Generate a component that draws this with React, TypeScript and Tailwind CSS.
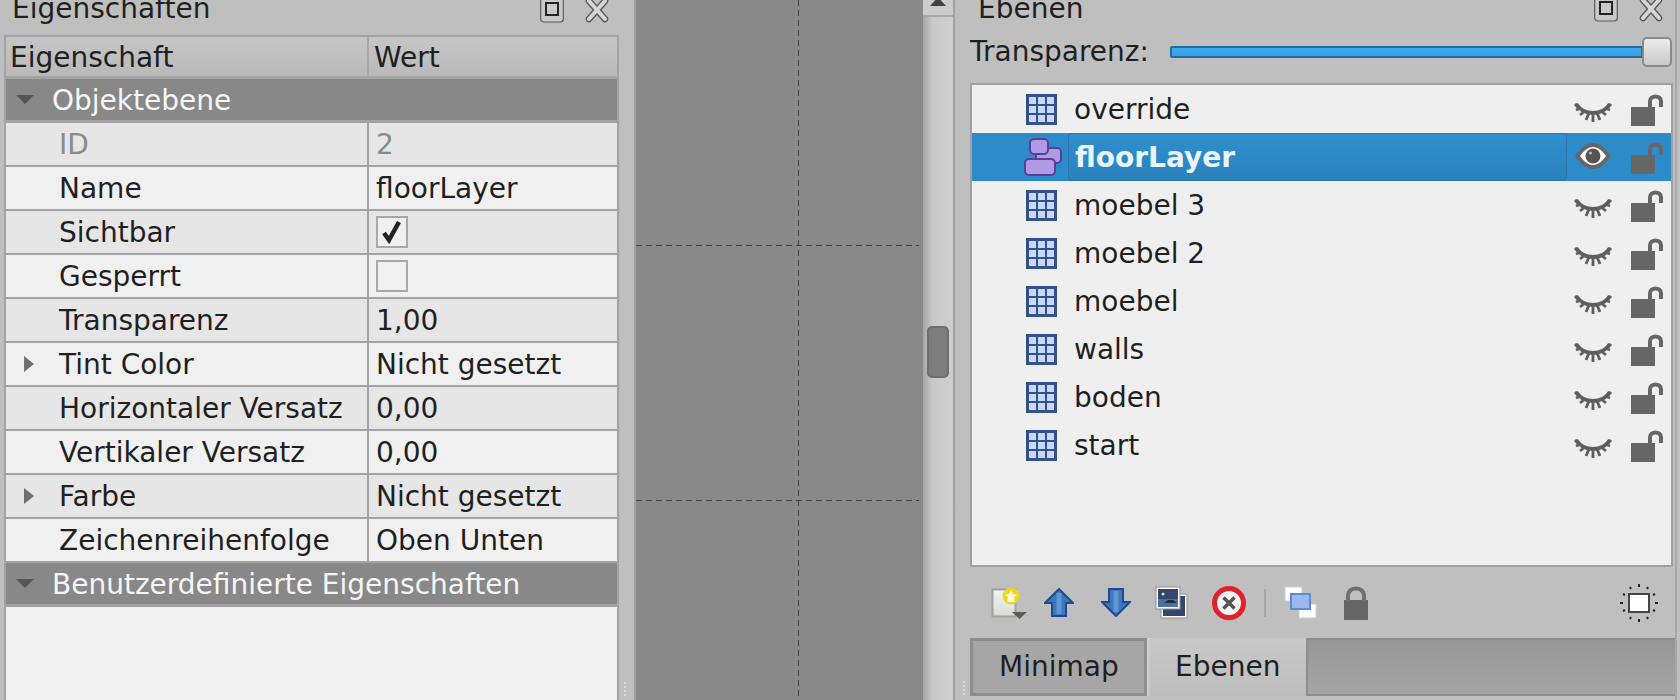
import type { ReactNode } from "react";

const props = [
  { name: "ID", value: "2", disabled: true },
  { name: "Name", value: "floorLayer" },
  { name: "Sichtbar", check: true },
  { name: "Gesperrt", check: false },
  { name: "Transparenz", value: "1,00" },
  { name: "Tint Color", value: "Nicht gesetzt", arrow: true },
  { name: "Horizontaler Versatz", value: "0,00" },
  { name: "Vertikaler Versatz", value: "0,00" },
  { name: "Farbe", value: "Nicht gesetzt", arrow: true },
  { name: "Zeichenreihenfolge", value: "Oben Unten" },
];

const layers = ["override", "floorLayer", "moebel 3", "moebel 2", "moebel", "walls", "boden", "start"];

function FloatIcon() {
  return (
    <svg width="24" height="24" viewBox="0 0 24 24" className="block">
      <rect x="0.700" y="-2" width="22.600" height="24" rx="3" fill="#c9c9c9" stroke="#5c5c5c" strokeWidth="1.200" />
      <rect x="6" y="3" width="12" height="12" fill="none" stroke="#222" strokeWidth="2" />
    </svg>
  );
}

function CloseIcon() {
  return (
    <svg width="24" height="24" viewBox="0 0 24 24" className="block">
      <path d="M4 1l16 18M20 1L4 19" stroke="#555" strokeWidth="6.500" strokeLinecap="round" />
      <path d="M4 1l16 18M20 1L4 19" stroke="#d6d6d6" strokeWidth="4" strokeLinecap="round" />
    </svg>
  );
}

function GridIcon() {
  return (
    <svg width="31" height="31" viewBox="0 0 31 31" className="shrink-0 block">
      <rect width="31" height="31" fill="#34508a" />
      {[3, 12, 21].map((x) =>
        [3, 12, 21].map((y) => <rect key={`${x}-${y}`} x={x} y={y} width="7" height="7" fill="#c8d8f8" />),
      )}
    </svg>
  );
}

function GroupIcon() {
  return (
    <svg width="38" height="38" viewBox="0 0 38 38" className="shrink-0 block -ml-[2px] -mr-[5px]">
      <rect x="12" y="10" width="25" height="15" rx="4" fill="#b09ae6" stroke="#5b3f94" strokeWidth="2" />
      <rect x="6" y="1" width="18" height="15" rx="4" fill="#b09ae6" stroke="#5b3f94" strokeWidth="2" />
      <rect x="1" y="21" width="30" height="16" rx="4" fill="#b09ae6" stroke="#5b3f94" strokeWidth="2" />
    </svg>
  );
}

function EyeClosed() {
  return (
    <svg width="38" height="21" viewBox="0 0 38 21" className="block mt-[7px]">
      <path d="M2 2c4 6 10 9 17 9s13-3 17-9" fill="none" stroke="#5e5e5e" strokeWidth="4" />
      <path
        d="M1 2l3 3M2 8l5-2M6 13l5-4M12 18l3-7M19 20v-8M26 18l-3-7M32 13l-5-4M36 8l-5-2M37 2l-3 3"
        stroke="#5e5e5e"
        strokeWidth="2.800"
      />
    </svg>
  );
}

function EyeOpen() {
  return (
    <svg width="38" height="28" viewBox="0 0 38 28" className="block -mt-[2px]">
      <path d="M1 14C7 5 13 1 19 1s12 4 18 13c-6 9-12 13-18 13S7 23 1 14z" fill="#666" />
      <path d="M6 14C10 8 15 5 19 5s9 3 13 9c-4 6-9 9-13 9s-9-3-13-9z" fill="#fff" />
      <circle cx="19" cy="14" r="7.500" fill="#555" />
      <circle cx="16.500" cy="11" r="1.500" fill="#bbb" />
    </svg>
  );
}

function LockOpen() {
  return (
    <svg width="33" height="32" viewBox="0 0 33 32" className="block mt-[1px]">
      <rect x="0" y="13" width="24" height="19" fill="#666" />
      <path d="M19 13V7c0-6 11-6 11 0v6" fill="none" stroke="#666" strokeWidth="4" />
    </svg>
  );
}

function NewLayerIcon() {
  return (
    <svg width="36" height="32" viewBox="0 0 36 32" className="block">
      <defs>
        <linearGradient id="paper" x1="0" y1="0" x2="0" y2="1">
          <stop offset="0" stopColor="#f4f4f4" />
          <stop offset="1" stopColor="#d8dbd2" />
        </linearGradient>
      </defs>
      <rect x="1.500" y="2.500" width="23" height="27" fill="url(#paper)" stroke="#a0a0a0" strokeWidth="2" />
      <circle cx="20" cy="9" r="8.500" fill="#e8d820" />
      <path d="M20 3l2 4 4 .5-3 3 .8 4.500H16.200l.8-4.500-3-3 4-.5z" fill="#fff8d0" />
      <path d="M21 25h15l-7.500 7z" fill="#5c5c5c" />
    </svg>
  );
}

function ArrowIcon({ down }: { down?: boolean }) {
  return (
    <svg width="30" height="29" viewBox="0 0 30 29" className={down ? "block rotate-180" : "block"}>
      <path d="M15 1L29 15h-7v13H8V15H1z" fill="#3d78bd" stroke="#1f4a8f" strokeWidth="2" />
      <path d="M15 5v21" stroke="#6096d2" strokeWidth="5" />
    </svg>
  );
}

function DuplicateIcon() {
  return (
    <svg width="33" height="33" viewBox="0 0 33 33" className="block">
      <rect x="7" y="9" width="24" height="22" fill="#34466e" stroke="#fff" strokeWidth="2" />
      <rect x="6" y="8" width="26" height="24" fill="none" stroke="#8f8f8f" strokeWidth="1" />
      <rect x="2" y="2" width="22" height="20" fill="#34466e" stroke="#fff" strokeWidth="2" />
      <rect x="1" y="1" width="24" height="22" fill="none" stroke="#8f8f8f" strokeWidth="1" />
      <circle cx="8" cy="8" r="1.500" fill="#e8e2a0" />
      <path d="M3 13h20v8H3z" fill="#4d6fa8" />
      <path d="M9 17l4-3h5l4 3z" fill="#232a3a" />
    </svg>
  );
}

function DeleteIcon() {
  return (
    <svg width="36" height="36" viewBox="0 0 36 36" className="block">
      <circle cx="18" cy="19" r="16.500" fill="#9a9a9a" />
      <circle cx="18" cy="18" r="14.500" fill="#f4f4f4" stroke="#e0202a" strokeWidth="5" />
      <path d="M12.500 12.500l11 11M23.500 12.500l-11 11" stroke="#555" strokeWidth="3.500" />
    </svg>
  );
}

function RaiseIcon() {
  return (
    <svg width="33" height="33" viewBox="0 0 33 33" className="block">
      <rect x="1" y="1" width="17" height="14" fill="#fff" stroke="#d0d0d0" />
      <rect x="15" y="18" width="17" height="14" fill="#fff" stroke="#d0d0d0" />
      <rect x="7" y="8" width="19" height="15" fill="#9db8ea" stroke="#5b8ad8" strokeWidth="2" />
    </svg>
  );
}

function LockClosed() {
  return (
    <svg width="24" height="34" viewBox="0 0 24 34" className="block">
      <rect y="14" width="24" height="20" fill="#666" />
      <path d="M4 15V10C4 0 20 0 20 10v5" fill="none" stroke="#707070" strokeWidth="4" />
    </svg>
  );
}

function HighlightIcon() {
  return (
    <svg width="38" height="38" viewBox="0 0 38 38" className="block">
      <rect x="9" y="10" width="20" height="18" fill="#fff" stroke="#444" strokeWidth="2" />
      <path
        d="M19 0v3M19 35v3M0 19h3M35 19h3M10 3l1 2M28 3l-1 2M3 10l2 1M35 10l-2 1M3 27l2-1M35 27l-2-1M10 35l1-2M28 35l-1-2"
        stroke="#222"
        strokeWidth="2"
      />
    </svg>
  );
}

function Section({ label }: { label: string }) {
  return (
    <div className="h-[44px] shrink-0 flex items-center bg-[#888888] border-b-[3px] border-[#a3a3a3]">
      <span className="ml-[10px] w-0 h-0 border-x-[9px] border-x-transparent border-t-[9px] border-t-[#555555]" />
      <span className="ml-[18px] pt-[2px] text-[#f6f6f6]">{label}</span>
    </div>
  );
}

function Cell({ children, className }: { children?: ReactNode; className?: string }) {
  return <div className={`flex items-center h-full ${className ?? ""}`}>{children}</div>;
}

function PropRow({ row, odd }: { row: (typeof props)[number]; odd: boolean }) {
  const color = row.disabled ? "text-[#8a8a8a]" : "text-[#1f1f1f]";
  return (
    <div className={`h-[44px] shrink-0 flex border-b-2 border-[#a3a3a3] ${odd ? "bg-[#f0f0f0]" : "bg-[#e6e6e6]"}`}>
      <Cell className={`w-[363px] shrink-0 border-r-2 border-[#a3a3a3] ${color}`}>
        {row.arrow ? (
          <span className="ml-[18px] w-0 h-0 border-y-[8px] border-y-transparent border-l-[10px] border-l-[#707070]" />
        ) : (
          <span className="ml-[18px] w-[10px]" />
        )}
        <span className="ml-[25px] pt-[2px]">{row.name}</span>
      </Cell>
      <Cell className={`pl-[7px] ${color}`}>
        {row.check === undefined ? (
          <span className="pt-[2px]">{row.value}</span>
        ) : (
          <span className="w-[32px] h-[32px] bg-[#f0f0f0] border-2 border-[#a8a8a8] flex items-center justify-center">
            {row.check && (
              <svg width="22" height="24" viewBox="0 0 22 24">
                <path d="M3 13l5 7L18 2" fill="none" stroke="#222" strokeWidth="4.500" />
              </svg>
            )}
          </span>
        )}
      </Cell>
    </div>
  );
}

function LayerRow({ name, selected }: { name: string; selected: boolean }) {
  return (
    <div className={`h-[48px] shrink-0 flex items-center ${selected ? "bg-[#2e8bc9]" : ""}`}>
      <div className="ml-[54px]">{selected ? <GroupIcon /> : <GridIcon />}</div>
      <div
        className={`ml-[11px] w-[499px] h-full flex items-center pl-[6px] pt-[2px] ${
          selected
            ? "font-bold text-[#eaf4fb] bg-gradient-to-b from-[#2f8fce] to-[#2b82bd] border border-[#2a78ae] rounded-[3px]"
            : "text-[#1f1f1f]"
        }`}
      >
        {name}
      </div>
      <div className="ml-[7px] w-[38px] flex justify-center">{selected ? <EyeOpen /> : <EyeClosed />}</div>
      <div className="ml-[19px] w-[33px]">
        <LockOpen />
      </div>
    </div>
  );
}

export default function App() {
  return (
    <div className="w-[1680px] h-[700px] flex overflow-hidden bg-[#bfbfbf] text-[28px] leading-none font-['DejaVu_Sans',sans-serif]">
      {/* properties dock */}
      <div className="w-[636px] shrink-0 flex flex-col pl-[4px] border-r-2 border-[#a0a0a0] relative">
        <div className="h-[35px] shrink-0 flex items-start justify-between text-[#1f1f1f]">
          <span className="ml-[8px] -mt-[5px]">Eigenschaften</span>
          <div className="flex gap-[21px] mr-[25px]">
            <FloatIcon />
            <CloseIcon />
          </div>
        </div>
        <div className="w-[615px] flex-1 flex flex-col border-l-2 border-t-2 border-r-2 border-[#a3a3a3] bg-[#f0f0f0]">
          <div className="h-[42px] shrink-0 flex text-[#1f1f1f] bg-gradient-to-b from-[#c6c6c6] to-[#b9b9b9] border-b-[3px] border-[#a3a3a3]">
            <Cell className="w-[363px] shrink-0 pl-[4px] pt-[2px] border-r-2 border-[#a8a8a8]">Eigenschaft</Cell>
            <Cell className="pl-[5px] pt-[2px]">Wert</Cell>
          </div>
          <Section label="Objektebene" />
          {props.map((p, i) => (
            <PropRow key={p.name} row={p} odd={i % 2 === 1} />
          ))}
          <Section label="Benutzerdefinierte Eigenschaften" />
        </div>
        <div className="absolute right-[6px] bottom-[4px] w-[4px] h-[14px] border-l-[2px] border-dotted border-[#d8d8d8]" />
      </div>

      {/* map canvas */}
      <div className="w-[287px] shrink-0 bg-[#898989]">
        <svg width="287" height="700" viewBox="0 0 287 700" className="block">
          <path
            d="M162.500 0V700M0 245.500H283M0 500.500H283"
            stroke="#444"
            strokeWidth="1"
            strokeDasharray="6 4"
            fill="none"
          />
        </svg>
      </div>

      {/* scrollbar */}
      <div className="w-[32px] shrink-0 flex flex-col items-center bg-gradient-to-r from-[#a6a6a6] via-[#c8c8c8] via-30% to-[#cfcfcf] border-r-2 border-[#a0a0a0]">
        <div className="w-full h-[17px] flex justify-center border-b-2 border-[#a8a8a8] bg-[#cccccc]">
          <span className="w-0 h-0 mt-[-3px] border-x-[8px] border-x-transparent border-b-[9px] border-b-[#444444]" />
        </div>
        <div className="mt-[309px] w-[22px] h-[52px] rounded-[5px] bg-[#7e7e7e] border-2 border-[#6e6e6e]" />
      </div>

      {/* layers dock */}
      <div className="flex-1 flex flex-col pl-[15px] pr-[3px] relative">
        <div className="h-[33px] shrink-0 flex items-start justify-between text-[#1f1f1f] pr-[14px]">
          <span className="ml-[8px] -mt-[5px]">Ebenen</span>
          <div className="flex gap-[21px] -mt-[1px]">
            <FloatIcon />
            <CloseIcon />
          </div>
        </div>
        <div className="h-[38px] mb-[12px] shrink-0 flex items-center text-[#1f1f1f]">
          <span>Transparenz:</span>
          <div className="ml-[21px] flex-1 flex items-center pr-[5px]">
            <div className="flex-1 h-[12px] rounded-l-[2px] border-2 border-[#27689a] bg-gradient-to-b from-[#41a9f0] to-[#36a0e8]" />
            <div className="-ml-[1px] w-[30px] h-[30px] rounded-[5px] border-2 border-[#8a8a8a] bg-gradient-to-b from-[#ececec] to-[#c9c9c9]" />
          </div>
        </div>
        <div className="w-[703px] h-[484px] shrink-0 border-2 border-[#a0a0a0] bg-[#efefef] flex flex-col">
          {layers.map((l) => (
            <LayerRow key={l} name={l} selected={l === "floorLayer"} />
          ))}
        </div>
        <div className="h-[71px] shrink-0 flex items-center">
          <div className="ml-[21px]"><NewLayerIcon /></div>
          <div className="ml-[17px]"><ArrowIcon /></div>
          <div className="ml-[27px]"><ArrowIcon down /></div>
          <div className="ml-[24px]"><DuplicateIcon /></div>
          <div className="ml-[23px]"><DeleteIcon /></div>
          <div className="ml-[17px] w-[2px] h-[28px] bg-[#a8a8a8]" />
          <div className="ml-[18px]"><RaiseIcon /></div>
          <div className="ml-[27px]"><LockClosed /></div>
          <div className="ml-[252px]"><HighlightIcon /></div>
        </div>
        <div className="h-[58px] w-[705px] shrink-0 flex text-[#1f1f1f]">
          <div className="w-[177px] h-full flex items-center pl-[26px] bg-[#a6a6a6] border-[3px] border-[#8e8e8e]">Minimap</div>
          <div className="w-[159px] h-full flex items-center pl-[26px] bg-gradient-to-b from-[#c9c9c9] to-[#bdbdbd] border-l-2 border-[#d0d0d0]">Ebenen</div>
          <div className="flex-1 h-full bg-gradient-to-b from-[#979797] to-[#a6a6a6] border-t-2 border-l-2 border-b-2 border-[#8e8e8e]" />
        </div>
        <div className="absolute left-[8px] bottom-[5px] w-[4px] h-[14px] border-l-[2px] border-dotted border-[#d8d8d8]" />
        <div className="absolute right-[3px] top-0 bottom-0 w-[2px] bg-[#a8a8a8]" />
      </div>
    </div>
  );
}
